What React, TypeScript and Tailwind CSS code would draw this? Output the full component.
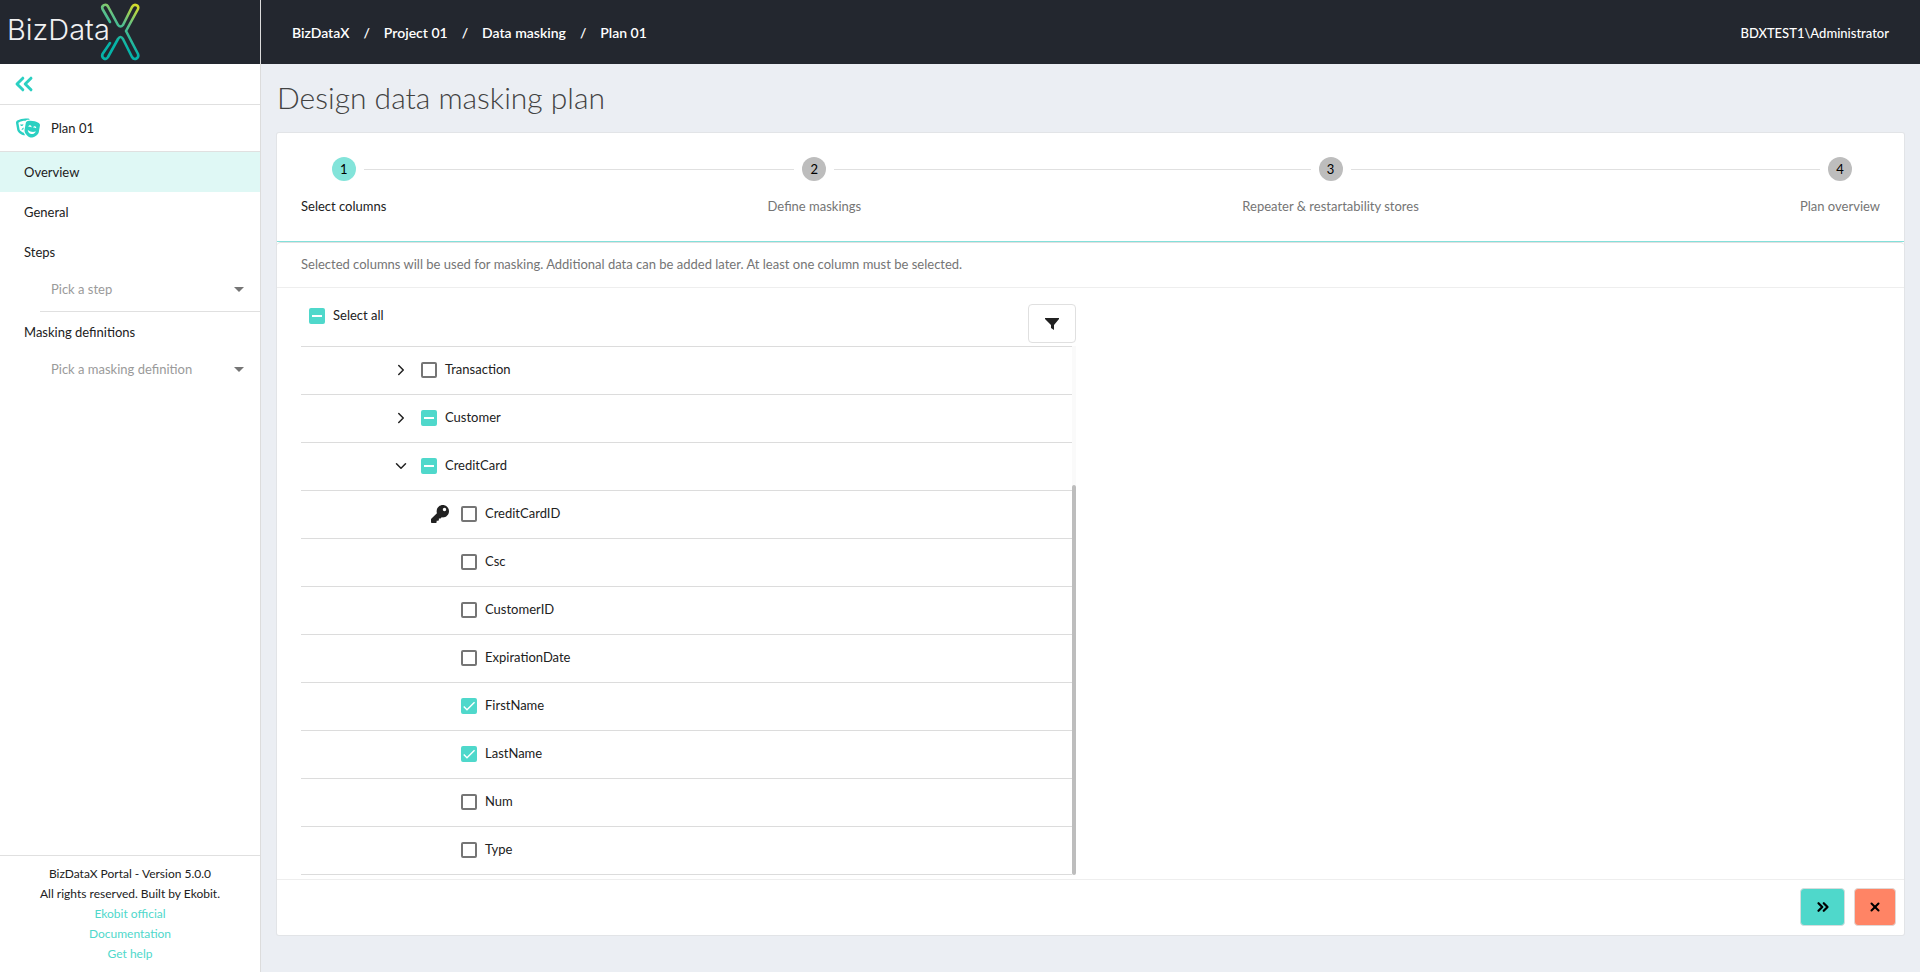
import { useEffect, useRef, useState } from 'react';
import { FaTheaterMasks, FaKey } from 'react-icons/fa';
import { ChevronDown, ChevronRight, ChevronsLeft, ChevronsRight, X } from 'lucide-react';
import clsx from 'clsx';

type CheckState = 'on' | 'off' | 'mixed';

interface TreeRow {
  id: string;
  level: 1 | 2;
  state: CheckState;
  expanded?: boolean;
  isKey?: boolean;
}

const ROWS: TreeRow[] = [
  { id: 'Transaction', level: 1, state: 'off', expanded: false },
  { id: 'Customer', level: 1, state: 'mixed', expanded: false },
  { id: 'CreditCard', level: 1, state: 'mixed', expanded: true },
  { id: 'CreditCardID', level: 2, state: 'off', isKey: true },
  { id: 'Csc', level: 2, state: 'off' },
  { id: 'CustomerID', level: 2, state: 'off' },
  { id: 'ExpirationDate', level: 2, state: 'off' },
  { id: 'FirstName', level: 2, state: 'on' },
  { id: 'LastName', level: 2, state: 'on' },
  { id: 'Num', level: 2, state: 'off' },
  { id: 'Type', level: 2, state: 'off' },
];

const STEPS = ['Select columns', 'Define maskings', 'Repeater & restartability stores', 'Plan overview'];
const CRUMBS = ['BizDataX', 'Project 01', 'Data masking', 'Plan 01'];

function Logo() {
  return (
    <svg width="144" height="64" viewBox="0 0 144 64" role="img" aria-label="BizDataX">
      <defs>
        <linearGradient id="logoX" x1="137" y1="6" x2="116" y2="42" gradientUnits="userSpaceOnUse">
          <stop offset="0" stopColor="#d3dc2b" />
          <stop offset="0.5" stopColor="#5cc08a" />
          <stop offset="1" stopColor="#06b3a8" />
        </linearGradient>
      </defs>
      <text x="7" y="40" fontSize="29" fontWeight="300" fill="#f1f1f2" fontFamily="Inter, sans-serif">
        BizData
      </text>
      <g fill="none" stroke="url(#logoX)" strokeWidth="2.600" strokeLinecap="round" strokeLinejoin="round">
        <path d="M110 22 L102.500 9 C101 5.500 106 3 108 6.500 L118 25 Q120.500 28 123 25 L132 7 C134.500 3 139.500 5.500 138 9 L126 31 L138 54 C139.500 58 134.500 61 132 57 L123 39 Q120.500 35 118 39 L108 57 C106 61 101 58 102.500 54 L110 43" />
      </g>
    </svg>
  );
}

function Checkbox({ id, label, state, onToggle }: { id: string; label: string; state: CheckState; onToggle: () => void }) {
  const ref = useRef<HTMLInputElement>(null);

  useEffect(() => {
    if (ref.current) ref.current.indeterminate = state === 'mixed';
  }, [state]);

  return (
    <label htmlFor={id} className="flex items-center gap-2 cursor-pointer">
      <span className="grid size-4 place-items-center">
        <input
          ref={ref}
          id={id}
          type="checkbox"
          checked={state === 'on'}
          onChange={onToggle}
          className="col-start-1 row-start-1 size-4 appearance-none rounded-xs border-2 border-[#757575] checked:border-[#4fd8cb] checked:bg-[#4fd8cb] indeterminate:border-[#4fd8cb] indeterminate:bg-[#4fd8cb]"
        />
        {state === 'mixed' && <span className="col-start-1 row-start-1 h-0.5 w-2.5 bg-white pointer-events-none" />}
        {state === 'on' && (
          <svg viewBox="0 0 24 24" className="col-start-1 row-start-1 size-4 pointer-events-none">
            <path d="M4.100 12.700 L9 17.600 L20.300 6.300" fill="none" stroke="#fff" strokeWidth="2.130" />
          </svg>
        )}
      </span>
      <span className="pb-0.5">{label}</span>
    </label>
  );
}

function SidebarSelect({ id, label, placeholder }: { id: string; label: string; placeholder: string }) {
  return (
    <div>
      <label htmlFor={id} className="flex h-10 items-center px-6">
        {label}
      </label>
      <div className="mb-1.5 ml-10 grid h-[34px] items-center">
        <select id={id} className="col-start-1 row-start-1 h-full appearance-none bg-transparent pl-[11px] text-[#9a9a9a]">
          <option>{placeholder}</option>
        </select>
        <svg width="10" height="5" viewBox="0 0 10 5" className="col-start-1 row-start-1 mr-4 justify-self-end pointer-events-none">
          <path d="M0 0 H10 L5 5 Z" fill="#757575" />
        </svg>
      </div>
    </div>
  );
}

function Sidebar() {
  return (
    <aside className="flex w-[261px] shrink-0 flex-col border-r border-[#dcdcdc] bg-white">
      <div className="flex h-[41px] items-center border-b border-[#e0e0e0] px-2.5">
        <button aria-label="Collapse menu" className="text-[#2bd0c2]">
          <ChevronsLeft className="size-7" strokeWidth={2.5} />
        </button>
      </div>
      <div className="flex h-[47px] items-center gap-[11px] border-b border-[#e0e0e0] px-4">
        <FaTheaterMasks className="size-6 text-[#2bd0c2]" />
        Plan 01
      </div>
      <nav>
        <a href="#overview" className="flex h-10 items-center bg-[#dff8f5] px-6">
          Overview
        </a>
        <a href="#general" className="flex h-10 items-center px-6">
          General
        </a>
      </nav>
      <SidebarSelect id="step" label="Steps" placeholder="Pick a step" />
      <hr className="-mt-px ml-10 border-[#e0e0e0]" />
      <SidebarSelect id="definition" label="Masking definitions" placeholder="Pick a masking definition" />
      <footer className="mt-auto flex flex-col items-center border-t border-[#e0e0e0] pt-2 pb-2 text-xs leading-5">
        <p>BizDataX Portal - Version 5.0.0</p>
        <p>All rights reserved. Built by Ekobit.</p>
        <a href="#official" className="text-[#4fd8cb]">Ekobit official</a>
        <a href="#docs" className="text-[#4fd8cb]">Documentation</a>
        <a href="#help" className="text-[#4fd8cb]">Get help</a>
      </footer>
    </aside>
  );
}

function Stepper() {
  return (
    <ol className="flex h-[108px] shrink-0 pt-6">
      {STEPS.map((step, i) => (
        <li key={step} className={clsx('flex', i > 0 && 'flex-auto')}>
          {i > 0 && <span className="mt-3 h-px flex-auto bg-[#e0e0e0]" />}
          <div className="flex flex-col">
            <div className="flex items-center gap-2">
              <span className={clsx('h-px flex-1', i > 0 && 'bg-[#e0e0e0]')} />
              <span
                className={clsx(
                  'flex size-6 items-center justify-center rounded-full text-black',
                  i === 0 ? 'bg-[#83e4da]' : 'bg-[#bdbdbd]'
                )}
              >
                {i + 1}
              </span>
              <span className={clsx('h-px flex-1', i < STEPS.length - 1 && 'bg-[#e0e0e0]')} />
            </div>
            <span className={clsx('px-6 pt-[15px] leading-5', i > 0 && 'text-[#757575]')}>{step}</span>
          </div>
        </li>
      ))}
    </ol>
  );
}

export default function App() {
  const [rows, setRows] = useState(ROWS);
  const [all, setAll] = useState<CheckState>('mixed');

  const toggle = (id: string) => {
    setRows(rows.map((r) => (r.id === id ? { ...r, state: r.state === 'on' ? 'off' : 'on' } : r)));
  };

  const toggleAll = () => {
    const next: CheckState = all === 'on' ? 'off' : 'on';
    setAll(next);
    setRows(rows.map((r) => ({ ...r, state: next })));
  };

  return (
    <div className="flex h-screen flex-col bg-[#ebeef3] font-['Lato',sans-serif] text-[13px] leading-5 text-[#212121]">
      {/* Top bar */}
      <header className="flex h-16 shrink-0 items-center bg-[#23272f] text-white">
        <div className="h-full w-[261px] border-r border-[#dcdcdc]">
          <Logo />
        </div>
        <nav aria-label="Breadcrumb" className="flex gap-3.5 px-[31px] pt-0.5 text-sm font-semibold">
          {CRUMBS.map((crumb, i) => (
            <span key={crumb} className="flex gap-3.5">
              {i > 0 && <span>/</span>}
              <a href="#crumb">{crumb}</a>
            </span>
          ))}
        </nav>
        <span className="ml-auto pt-0.5 pr-[31px] font-medium">BDXTEST1\Administrator</span>
      </header>

      <div className="flex min-h-0 flex-1">
        <Sidebar />

        <main className="flex min-w-0 flex-1 flex-col px-4 pt-[15px] pb-[37px]">
          <h1 className="mb-[18px] text-3xl leading-9 font-light text-[#424242]">Design data masking plan</h1>

          <div className="flex min-h-0 flex-1 flex-col rounded-xs bg-white shadow-[0_0_0_1px_#e2e4e7]">
            <Stepper />

            <section className="flex min-h-0 flex-1 flex-col border-t border-[#83e0da]">
              <p className="flex h-[46px] shrink-0 items-center rounded-t border-t border-b border-[#eeeeee] border-t-[#e0e0e0] px-6 pb-0.5 text-[#757575]">
                Selected columns will be used for masking. Additional data can be added later. At least one column must be selected.
              </p>

              {/* Column tree */}
              <div className="ml-6 flex min-h-0 w-1/2 max-w-[775px] flex-1 flex-col">
                <div className="flex h-[58px] shrink-0 items-start justify-between pt-4 pl-2">
                  <div className="pt-px">
                    <Checkbox id="select-all" label="Select all" state={all} onToggle={toggleAll} />
                  </div>
                  <button aria-label="Filter" className="flex h-[39px] w-12 items-center justify-center rounded border border-[#e0e0e0]">
                    <svg width="14" height="12" viewBox="0 0 14 12">
                      <path d="M0 0 H14 V1 L9 7 V12 L6 10 V7 L0 1 Z" fill="#212121" />
                    </svg>
                  </button>
                </div>
                <div className="flex min-h-0 flex-1 pb-1">
                  <ul className="flex-1 overflow-hidden border-t border-[#dcdcdc]">
                    {rows.map((row) => (
                      <li
                        key={row.id}
                        className={clsx(
                          'flex h-12 items-center justify-start border-b border-[#dcdcdc] pb-0.5',
                          row.level === 1 ? 'pl-[92px]' : 'pl-[128px]'
                        )}
                      >
                        {row.level === 1 ? (
                          <button aria-label={`Toggle ${row.id}`} className="mr-3 flex size-4 items-center justify-center">
                            {row.expanded ? (
                              <ChevronDown className="size-[18px] shrink-0" strokeWidth={2} />
                            ) : (
                              <ChevronRight className="size-[18px] shrink-0" strokeWidth={2} />
                            )}
                          </button>
                        ) : (
                          <span className="mr-3 flex w-5 justify-end">{row.isKey && <FaKey className="size-[18px]" />}</span>
                        )}
                        <Checkbox id={row.id} label={row.id} state={row.state} onToggle={() => toggle(row.id)} />
                      </li>
                    ))}
                  </ul>
                  <div className="flex w-1 flex-col">
                    <div className="h-[139px] bg-[#fafafa]" />
                    <div className="flex-1 rounded-full bg-[#bdbdbd]" />
                  </div>
                </div>
              </div>

              <div className="flex h-14 shrink-0 items-center justify-end gap-[9px] border-t border-[#eeeeee] px-2 pb-px text-black">
                <button aria-label="Next" className="flex h-[38px] w-[45px] items-center justify-center rounded border border-[#d5dddd] bg-[#4fd8cb]">
                  <ChevronsRight className="size-[18px]" strokeWidth={3} />
                </button>
                <button aria-label="Cancel" className="flex h-[38px] w-[42px] items-center justify-center rounded border border-[#e0d8d6] bg-[#ff8465]">
                  <X className="size-3.5" strokeWidth={3.5} />
                </button>
              </div>
            </section>
          </div>
        </main>
      </div>
    </div>
  );
}
